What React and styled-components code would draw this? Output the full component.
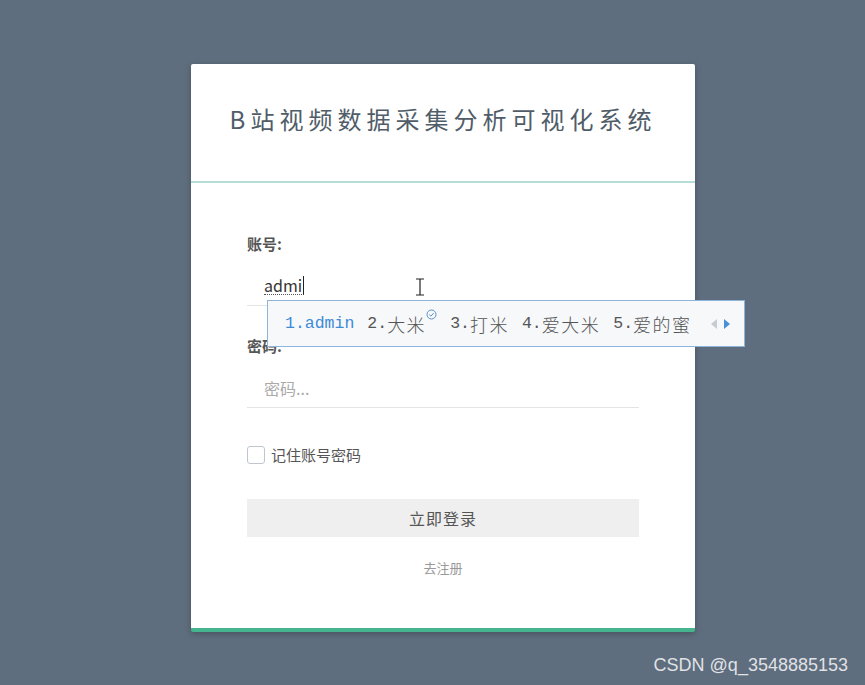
import React from "react";
import styled, { createGlobalStyle } from "styled-components";

const Global = createGlobalStyle`
  html, body { margin: 0; padding: 0; }
  body {
    background: #5f6e7e;
    font-family: "Noto Sans CJK SC", "Noto Sans", sans-serif;
    width: 865px;
    height: 685px;
    overflow: hidden;
  }
`;

const Page = styled.div`
  position: relative;
  width: 865px;
  height: 685px;
  padding: 64px 0 0 191px;
  box-sizing: border-box;
`;

const Card = styled.div`
  width: 504px;
  background: #fff;
  border-bottom: 4px solid #46b48f;
  box-shadow: 0 2px 6px rgba(0, 0, 0, 0.25);
  border-radius: 2px;
`;

const Header = styled.div`
  height: 119px;
  box-sizing: border-box;
  padding-bottom: 8px;
  display: flex;
  align-items: center;
  justify-content: center;
  border-bottom: 2px solid #b3ddd6;
`;

const Title = styled.h1`
  margin: 0;
  padding-left: 0;
  font-size: 24px;
  font-weight: 400;
  letter-spacing: 5px;
  color: #505d69;
  font-family: "Noto Sans CJK SC", sans-serif;
`;

const Body = styled.form`
  display: flex;
  flex-direction: column;
  padding: 51px 56px 51px;
`;

const Label = styled.label`
  display: block;
  font-size: 15px;
  line-height: 20px;
  font-weight: 700;
  color: #555;
  margin-top: ${(p) => p.$mt || 0}px;
`;

const Field = styled.div`
  position: relative;
  height: 40px;
  box-sizing: border-box;
  margin-top: 12px;
  border-bottom: 1px solid #e4e4e4;
  display: flex;
  align-items: center;
  padding-left: 17px;
  font-size: 16px;
  color: ${(p) => (p.$placeholder ? "#aaa" : "#333")};
  font-family: "Noto Sans CJK SC", sans-serif;
`;

const Composing = styled.span`
  border-bottom: 1px dotted #555;
  line-height: 18px;
  border-right: 1px solid #222;
  padding-right: 1px;
`;

const Candidates = styled.div`
  position: absolute;
  left: 20px;
  top: 34px;
  width: 478px;
  height: 47px;
  box-sizing: border-box;
  background: #f6f8fa;
  border: 1px solid #8db5dc;
  display: flex;
  align-items: center;
  padding-left: 17px;
  z-index: 2;
  font-family: "Liberation Mono", "Noto Sans CJK SC", monospace;
  font-size: 16.5px;
  color: #555;
`;

const Cand = styled.span`
  margin-right: 13px;
  color: ${(p) => (p.$active ? "#3d8ad6" : "#555")};
  white-space: nowrap;
  display: flex;
  align-items: center;
`;

const Cn = styled.span`
  font-family: "Noto Sans CJK SC", sans-serif;
  font-weight: 300;
  font-size: 18px;
  letter-spacing: 1.5px;
`;

const Check = styled.svg`
  align-self: flex-start;
  margin-top: -2px;
`;

const Arrows = styled.div`
  display: flex;
  gap: 7px;
  margin-left: 6px;
`;

const CheckRow = styled.div`
  display: flex;
  align-items: center;
  gap: 6px;
  margin-top: 37px;
  font-size: 15px;
  line-height: 20px;
  color: #555;
`;

const Box = styled.span`
  width: 18px;
  height: 18px;
  border: 1px solid #bfc6cd;
  border-radius: 3px;
  box-sizing: border-box;
  background: #fff;
`;

const Button = styled.div`
  margin-top: 34px;
  height: 38px;
  background: #efefef;
  display: flex;
  align-items: center;
  justify-content: center;
  font-size: 16px;
  color: #555;
  letter-spacing: 1px;
`;

const Link = styled.div`
  margin-top: 21px;
  text-align: center;
  font-size: 13px;
  line-height: 19px;
  color: #999;
`;

const Cursor = styled.svg`
  position: absolute;
  left: 168px;
  top: 12px;
`;

const Watermark = styled.div`
  position: absolute;
  right: 17px;
  bottom: 9px;
  font-family: "Liberation Sans", Arial, sans-serif;
  font-size: 18px;
  color: rgba(255, 255, 255, 0.82);
`;

export default function App() {
  return (
    <>
      <Global />
      <Page>
        <Card>
          <Header>
            <Title>B站视频数据采集分析可视化系统</Title>
          </Header>
          <Body>
            <Label>账号:</Label>
            <Field>
              <Composing>admi</Composing>
              <Cursor width="10" height="18" viewBox="0 0 10 18">
                <path d="M1 1h8M5 1v16M1 17h8" stroke="#222" strokeWidth="1.2" fill="none" />
              </Cursor>
              <Candidates>
                <Cand $active>1.admin</Cand>
                <Cand>
                  2.<Cn>大米</Cn>
                  <Check width="11" height="11" viewBox="0 0 11 11">
                    <circle cx="5.5" cy="5.5" r="4.5" stroke="#5a8fc7" strokeWidth="1" fill="none" />
                    <path d="M3.3 5.6l1.6 1.5 2.8-3" stroke="#5a8fc7" strokeWidth="1" fill="none" />
                  </Check>
                </Cand>
                <Cand>3.<Cn>打米</Cn></Cand>
                <Cand>4.<Cn>爱大米</Cn></Cand>
                <Cand>5.<Cn>爱的蜜</Cn></Cand>
                <Arrows>
                  <svg width="6" height="10" viewBox="0 0 6 10">
                    <path d="M6 0L0 5l6 5z" fill="#c7ccd2" />
                  </svg>
                  <svg width="6" height="10" viewBox="0 0 6 10">
                    <path d="M0 0l6 5-6 5z" fill="#4a90d9" />
                  </svg>
                </Arrows>
              </Candidates>
            </Field>
            <Label $mt={30}>密码:</Label>
            <Field $placeholder>密码...</Field>
            <CheckRow>
              <Box />
              记住账号密码
            </CheckRow>
            <Button>立即登录</Button>
            <Link>去注册</Link>
          </Body>
        </Card>
        <Watermark>CSDN @q_3548885153</Watermark>
      </Page>
    </>
  );
}
